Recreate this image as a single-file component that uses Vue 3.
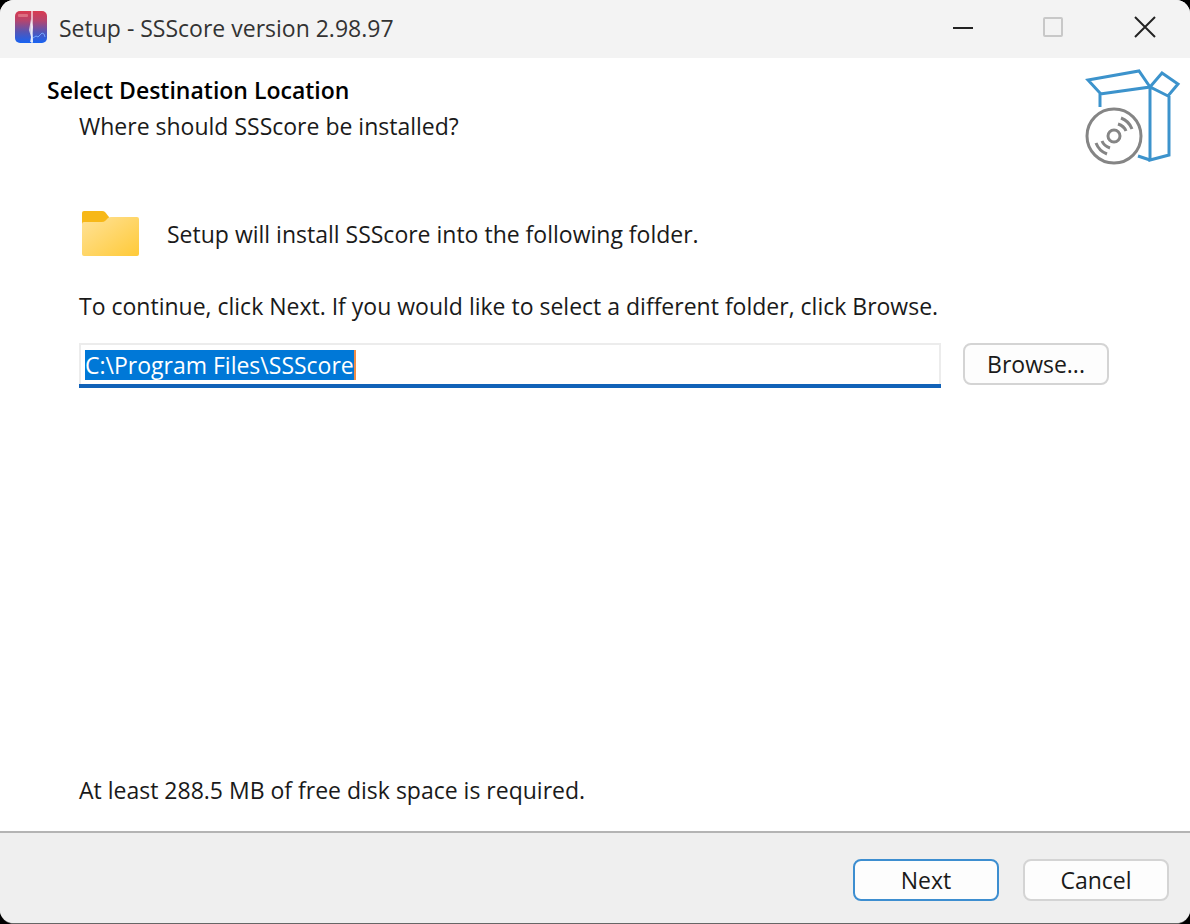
<script setup>
import { onMounted, ref } from "vue";

const appName = "SSScore";
const version = "2.98.97";
const diskSpace = "288.5 MB";

const folder = ref("C:\\Program Files\\SSScore");
const folderInput = ref(null);

onMounted(() => {
  folderInput.value.focus();
  folderInput.value.select();
});
</script>

<template>
  <div class="window">
    <header class="titlebar">
      <svg class="app-icon" viewBox="0 0 32 32" aria-hidden="true">
        <defs>
          <linearGradient id="app-bg" x1="0" y1="0" x2="0" y2="1">
            <stop offset="0" stop-color="#d93a50" />
            <stop offset="0.3" stop-color="#b5456e" />
            <stop offset="0.65" stop-color="#5555b5" />
            <stop offset="1" stop-color="#1763f2" />
          </linearGradient>
        </defs>
        <rect width="32" height="32" rx="5" fill="url(#app-bg)" />
        <rect x="3" y="3" width="10" height="3" rx="1" fill="#e98d9a" opacity="0.6" />
        <rect x="16" y="0" width="2" height="32" fill="#fff" opacity="0.6" />
        <path d="M16 8L14 19L16 26L15 31L18 31L17 22L18 16Z" fill="#fff" opacity="0.7" />
        <path d="M18 27L21 25L23 26L27 22L29 23L30 26" fill="none" stroke="#72a4fa" stroke-width="1" />
      </svg>
      <span class="title">Setup - {{ appName }} version {{ version }}</span>
      <div class="controls">
        <button type="button" aria-label="Minimize">
          <svg viewBox="0 0 24 24"><path d="M2 13H22" stroke="#222" stroke-width="2" /></svg>
        </button>
        <button type="button" aria-label="Maximize" disabled>
          <svg viewBox="0 0 24 24">
            <rect x="2" y="3" width="18" height="18" rx="1" fill="none" stroke="#c8c8c8" stroke-width="2" />
          </svg>
        </button>
        <button type="button" aria-label="Close">
          <svg viewBox="0 0 24 24"><path d="M2 2L22 22M22 2L2 22" stroke="#222" stroke-width="2" /></svg>
        </button>
      </div>
    </header>

    <div class="heading">
      <div>
        <h1>Select Destination Location</h1>
        <p>Where should {{ appName }} be installed?</p>
      </div>
      <svg class="box-icon" viewBox="0 0 96 100" fill="none" aria-hidden="true">
        <g stroke="#3c93cc" stroke-width="3">
          <path d="M15 41V27L3 14L54 5L65 21L15 28" />
          <path d="M65 21L77 7L93 18L83 30L65 21V94L84 89V30" />
          <path d="M53 90L65 94" />
        </g>
        <g stroke="#858585" stroke-width="3">
          <circle cx="29" cy="70" r="27" />
          <circle cx="29" cy="70" r="6" />
          <path d="M33 58Q39 60 41 65M36 52Q44 55 47 63" />
          <path d="M25 82Q19 80 17 75M22 88Q14 85 11 77" />
        </g>
      </svg>
    </div>

    <main class="content">
      <div class="intro">
        <svg class="folder-icon" viewBox="0 0 58 46" aria-hidden="true">
          <defs>
            <linearGradient id="folder-bg" x1="0" y1="0" x2="1" y2="1">
              <stop offset="0" stop-color="#ffe298" />
              <stop offset="1" stop-color="#ffca38" />
            </linearGradient>
          </defs>
          <path d="M0 2Q0 0 2 0H20Q22 0 23 1L27 6V14H0Z" fill="#f7b818" />
          <path d="M0 13Q0 11 2 11H20Q22 11 23 10L26 7Q27 6 29 6H55Q57 6 57 8V43Q57 45 55 45H2Q0 45 0 43Z" fill="url(#folder-bg)" />
        </svg>
        <p>Setup will install {{ appName }} into the following folder.</p>
      </div>
      <label class="hint" for="folder">To continue, click Next. If you would like to select a different folder, click Browse.</label>
      <div class="picker">
        <div class="field" @click="folderInput.focus()">
          <input id="folder" ref="folderInput" v-model="folder" type="text" spellcheck="false" />
          <span class="caret"></span>
        </div>
        <button type="button" class="btn">Browse...</button>
      </div>
      <p class="disk">At least {{ diskSpace }} of free disk space is required.</p>
    </main>

    <footer class="footer">
      <button type="button" class="btn primary">Next</button>
      <button type="button" class="btn">Cancel</button>
    </footer>
  </div>
</template>

<style>
body {
  margin: 0;
  background: #000;
}
</style>

<style scoped>
.window {
  display: flex;
  flex-direction: column;
  box-sizing: border-box;
  min-height: 100vh;
  overflow: hidden;
  border-bottom: 1px solid #666;
  border-radius: 14px;
  background: #fff;
  color: #1a1a1a;
  font-family: "Open Sans", "Noto Sans", sans-serif;
  font-size: 23px;
  line-height: 36px;
}

h1,
p {
  margin: 0;
}

.titlebar {
  display: flex;
  align-items: center;
  box-sizing: border-box;
  height: 58px;
  padding: 0 0 2px 15px;
  background: #f3f3f3;
}

.app-icon {
  width: 32px;
  height: 32px;
  margin: -2px 12px 0 0;
}

.title {
  color: #333;
}

.controls {
  display: flex;
  align-self: stretch;
  margin-left: auto;
}

.controls button {
  display: flex;
  align-items: center;
  justify-content: center;
  width: 91px;
  padding: 0 0 2px;
  border: none;
  background: none;
}

.controls svg {
  width: 24px;
  height: 24px;
}

.heading {
  display: flex;
  justify-content: space-between;
  padding: 8px 9px 0 47px;
}

h1 {
  margin-top: 6px;
  color: #000;
  font-size: 23px;
  font-weight: 600;
}

.heading p {
  padding-left: 32px;
}

.box-icon {
  width: 96px;
  height: 100px;
}

.content {
  display: flex;
  flex: 1;
  flex-direction: column;
  padding: 44px 81px 23px 79px;
}

.intro {
  display: flex;
  align-items: center;
  gap: 27px;
  margin-bottom: 30px;
}

.folder-icon {
  width: 58px;
  height: 48px;
  margin-left: 3px;
}

.picker {
  display: flex;
  align-items: flex-start;
  gap: 22px;
  margin-top: 19px;
}

.field {
  display: flex;
  flex: 1;
  align-items: center;
  box-sizing: border-box;
  height: 45px;
  padding: 0 6px 1px;
  background: #fff;
  box-shadow: inset 0 -4px #1162b8, inset 0 0 0 2px #ececec;
  cursor: text;
}

.field input {
  field-sizing: content;
  max-width: 100%;
  height: 30px;
  padding: 0;
  border: none;
  outline: none;
  background: none;
  color: inherit;
  font: inherit;
  line-height: 30px;
}

.field input::selection {
  background: #0078d7;
  color: #fff;
}

.caret {
  width: 2px;
  height: 30px;
  background: #f08c46;
}

.btn {
  box-sizing: border-box;
  width: 146px;
  height: 42px;
  padding: 0;
  border: 2px solid #d4d4d4;
  border-radius: 8px;
  background: #fdfdfd;
  color: inherit;
  font: inherit;
}

.btn.primary {
  border-color: #3d8ed0;
}

.disk {
  margin-top: auto;
}

.footer {
  display: flex;
  justify-content: flex-end;
  gap: 24px;
  padding: 26px 21px 22px;
  border-top: 2px solid #b4b4b4;
  background: #efefef;
}
</style>
